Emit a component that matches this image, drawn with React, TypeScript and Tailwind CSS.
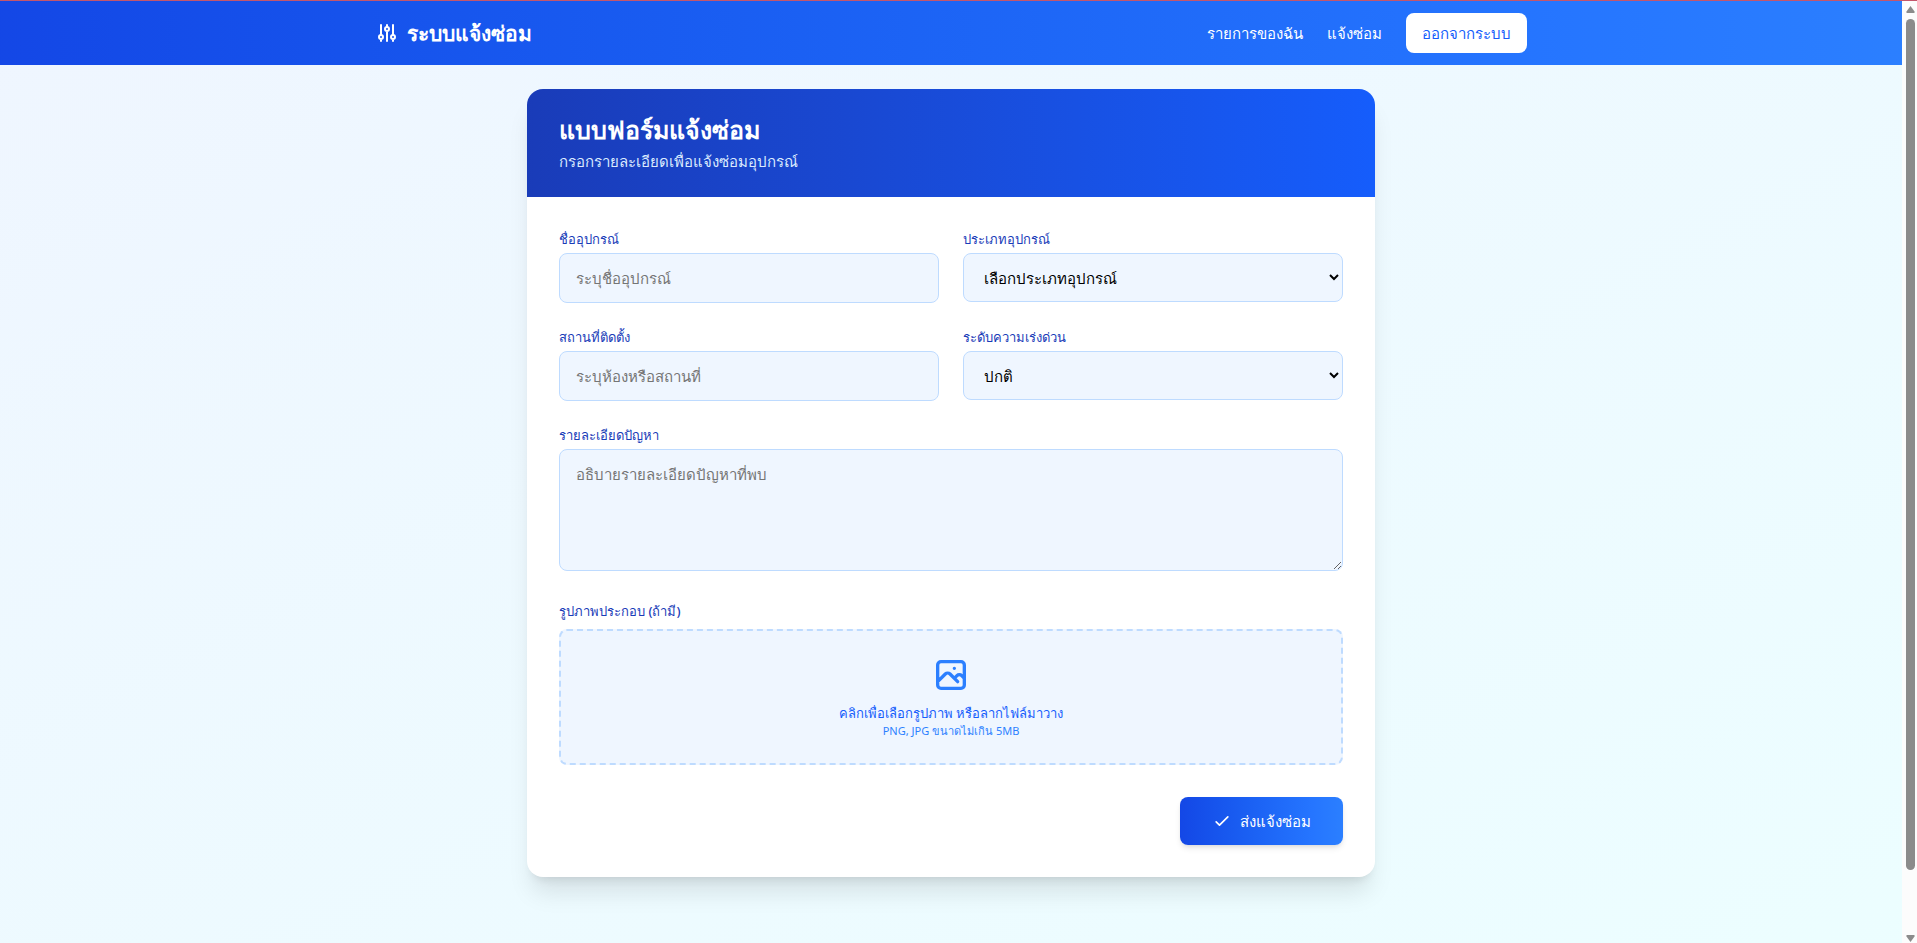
import { useState } from "react";

const labelClass = "block text-[13px] leading-5 font-medium text-blue-800";
const fieldClass =
  "block w-full rounded-lg border border-blue-200 bg-blue-50 px-4 py-3 text-[15px] leading-6 placeholder:text-[#757575] focus:outline-none focus:ring-2 focus:ring-blue-500";
const selectClass =
  "block h-[49px] w-full rounded-lg border border-blue-200 bg-blue-50 px-4 text-[15px] leading-6 focus:outline-none focus:ring-2 focus:ring-blue-500";

export default function App() {
  const [deviceName, setDeviceName] = useState("");
  const [deviceType, setDeviceType] = useState("");
  const [location, setLocation] = useState("");
  const [urgency, setUrgency] = useState("normal");
  const [detail, setDetail] = useState("");

  return (
    <div className="flex h-screen overflow-hidden border-t border-[#c4566c] font-['Noto_Sans','Open_Sans',sans-serif] text-[15px]">
      <div className="min-w-0 flex-1 overflow-y-auto [scrollbar-width:none]">
        <nav className="bg-gradient-to-r from-blue-700 to-blue-500 py-3 text-white">
          <div className="mx-auto flex max-w-6xl items-center justify-between">
            <a href="#" className="flex items-center gap-2 text-[21px] leading-7 font-bold">
              <svg className="h-6 w-6" fill="none" viewBox="0 0 24 24" stroke="currentColor" strokeWidth={2}>
                <path
                  strokeLinecap="round"
                  strokeLinejoin="round"
                  d="M12 6V4m0 2a2 2 0 100 4m0-4a2 2 0 110 4m-6 8a2 2 0 100-4m0 4a2 2 0 110-4m0 4v2m0-6V4m6 6v10m6-2a2 2 0 100-4m0 4a2 2 0 110-4m0 4v2m0-6V4"
                />
              </svg>
              <span>ระบบแจ้งซ่อม</span>
            </a>
            <div className="flex items-center gap-6 font-medium">
              <a href="#">รายการของฉัน</a>
              <a href="#">แจ้งซ่อม</a>
              <button type="button" className="rounded-lg bg-white px-4 py-2 leading-6 text-blue-600">
                ออกจากระบบ
              </button>
            </div>
          </div>
        </nav>

        <main className="min-h-screen bg-gradient-to-br from-blue-50 to-cyan-50 px-6 py-6">
          <div className="mx-auto max-w-[848px] overflow-hidden rounded-2xl bg-white shadow-xl">
            <div className="bg-gradient-to-r from-blue-800 to-blue-600 px-8 py-6">
              <h1 className="text-[25px] leading-8 font-bold text-white">แบบฟอร์มแจ้งซ่อม</h1>
              <p className="mt-1 leading-6 text-blue-100">กรอกรายละเอียดเพื่อแจ้งซ่อมอุปกรณ์</p>
            </div>

            <form className="space-y-6 p-8" onSubmit={(e) => e.preventDefault()}>
              <div className="grid grid-cols-1 gap-6 md:grid-cols-2">
                <div className="space-y-1">
                  <label htmlFor="deviceName" className={labelClass}>
                    ชื่ออุปกรณ์
                  </label>
                  <input
                    id="deviceName"
                    type="text"
                    className={fieldClass}
                    placeholder="ระบุชื่ออุปกรณ์"
                    value={deviceName}
                    onChange={(e) => setDeviceName(e.target.value)}
                  />
                </div>
                <div className="space-y-1">
                  <label htmlFor="deviceType" className={labelClass}>
                    ประเภทอุปกรณ์
                  </label>
                  <select
                    id="deviceType"
                    className={selectClass}
                    value={deviceType}
                    onChange={(e) => setDeviceType(e.target.value)}
                  >
                    <option value="">เลือกประเภทอุปกรณ์</option>
                  </select>
                </div>
                <div className="space-y-1">
                  <label htmlFor="location" className={labelClass}>
                    สถานที่ติดตั้ง
                  </label>
                  <input
                    id="location"
                    type="text"
                    className={fieldClass}
                    placeholder="ระบุห้องหรือสถานที่"
                    value={location}
                    onChange={(e) => setLocation(e.target.value)}
                  />
                </div>
                <div className="space-y-1">
                  <label htmlFor="urgency" className={labelClass}>
                    ระดับความเร่งด่วน
                  </label>
                  <select
                    id="urgency"
                    className={selectClass}
                    value={urgency}
                    onChange={(e) => setUrgency(e.target.value)}
                  >
                    <option value="normal">ปกติ</option>
                  </select>
                </div>
              </div>

              <div className="space-y-1 pb-[6px]">
                <label htmlFor="detail" className={labelClass}>
                  รายละเอียดปัญหา
                </label>
                <textarea
                  id="detail"
                  rows={4}
                  className={fieldClass}
                  placeholder="อธิบายรายละเอียดปัญหาที่พบ"
                  value={detail}
                  onChange={(e) => setDetail(e.target.value)}
                />
              </div>

              <div className="space-y-2">
                <label htmlFor="image" className={labelClass}>
                  รูปภาพประกอบ (ถ้ามี)
                </label>
                <label
                  htmlFor="image"
                  className="flex cursor-pointer flex-col items-center rounded-lg border-2 border-dashed border-blue-200 bg-blue-50 p-6"
                >
                  <svg
                    className="mb-2 h-10 w-10 text-blue-500"
                    fill="none"
                    viewBox="0 0 24 24"
                    stroke="currentColor"
                    strokeWidth={2}
                  >
                    <path
                      strokeLinecap="round"
                      strokeLinejoin="round"
                      d="M4 16l4.586-4.586a2 2 0 012.828 0L16 16m-2-2l1.586-1.586a2 2 0 012.828 0L20 14m-6-6h.01M6 20h12a2 2 0 002-2V6a2 2 0 00-2-2H6a2 2 0 00-2 2v12a2 2 0 002 2z"
                    />
                  </svg>
                  <span className="text-[13px] leading-5 font-medium text-blue-600">
                    คลิกเพื่อเลือกรูปภาพ หรือลากไฟล์มาวาง
                  </span>
                  <span className="text-[11px] leading-4 text-blue-500">PNG, JPG ขนาดไม่เกิน 5MB</span>
                </label>
                <input id="image" type="file" accept="image/png,image/jpeg" className="hidden" />
              </div>

              <div className="flex justify-end pt-2">
                <button
                  type="submit"
                  className="flex items-center gap-2 rounded-lg bg-gradient-to-r from-blue-700 to-blue-500 px-8 py-3 leading-6 font-medium text-white shadow-md"
                >
                  <svg className="h-5 w-5" fill="none" viewBox="0 0 24 24" stroke="currentColor" strokeWidth={2}>
                    <path strokeLinecap="round" strokeLinejoin="round" d="M5 13l4 4L19 7" />
                  </svg>
                  ส่งแจ้งซ่อม
                </button>
              </div>
            </form>
          </div>
        </main>
      </div>

      <Scrollbar />
    </div>
  );
}

function Scrollbar() {
  return (
    <div className="flex w-[15px] shrink-0 flex-col gap-1.5 bg-[#fcfcfc] pt-1 pr-0.5 pl-1" aria-hidden="true">
      <svg className="h-2 w-[9px]" viewBox="0 0 9 8" fill="#8b8b8b">
        <path d="M4.5 1 8.5 6.5V8h-8V6.5z" />
      </svg>
      <div className="w-[9px] flex-[16] rounded-full bg-[#8b8b8b]" />
      <div className="flex-1" />
      <svg className="h-2 w-[9px]" viewBox="0 0 9 8" fill="#8b8b8b">
        <path d="M4.5 7 8.5 1.5V0h-8v1.5z" />
      </svg>
    </div>
  );
}
